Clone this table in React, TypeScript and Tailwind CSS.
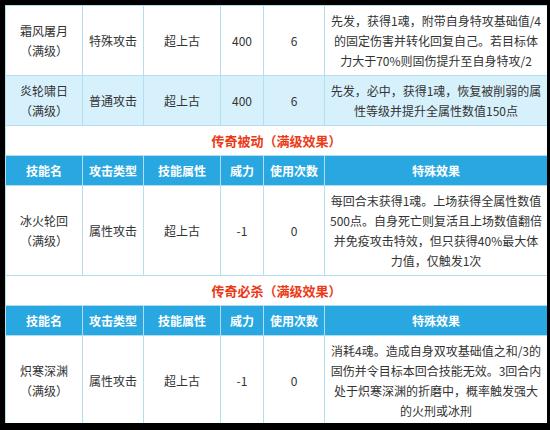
const font = { fontFamily: '"Microsoft YaHei", "Noto Sans CJK SC", sans-serif' };

type Row = {
  name: string;
  type: string;
  attr: string;
  power: string;
  uses: string;
  effect: string[];
  h: string;
  alt?: boolean;
};

const top: Row[] = [
  {
    name: "霜风屠月",
    type: "特殊攻击",
    attr: "超上古",
    power: "400",
    uses: "6",
    effect: ["先发，获得1魂，附带自身特攻基础值/4", "的固定伤害并转化回复自己。若目标体", "力大于70%则固伤提升至自身特攻/2"],
    h: "h-[70px]",
  },
  {
    name: "炎轮啸日",
    type: "普通攻击",
    attr: "超上古",
    power: "400",
    uses: "6",
    effect: ["先发，必中，获得1魂，恢复被削弱的属", "性等级并提升全属性数值150点"],
    h: "h-[50px]",
    alt: true,
  },
];

const passive: Row = {
  name: "冰火轮回",
  type: "属性攻击",
  attr: "超上古",
  power: "-1",
  uses: "0",
  effect: ["每回合末获得1魂。上场获得全属性数值", "500点。自身死亡则复活且上场数值翻倍", "并免疫攻击特效，但只获得40%最大体", "力值，仅触发1次"],
  h: "h-[90px]",
};

const ultimate: Row = {
  name: "炽寒深渊",
  type: "属性攻击",
  attr: "超上古",
  power: "-1",
  uses: "0",
  effect: ["消耗4魂。造成自身双攻基础值之和/3的", "固伤并令目标本回合技能无效。3回合内", "处于炽寒深渊的折磨中，概率触发强大", "的火刑或冰刑"],
  h: "h-[90px]",
};

const cell = "border border-[#b3def2] text-center align-middle p-0";

function DataRow({ r }: { r: Row }) {
  return (
    <tr className={`${r.h} ${r.alt ? "bg-[#d7f1fc]" : "bg-white"}`}>
      <td className={cell}>
        {r.name}
        <br />
        （满级）
      </td>
      <td className={cell}>{r.type}</td>
      <td className={cell}>{r.attr}</td>
      <td className={cell}>{r.power}</td>
      <td className={cell}>{r.uses}</td>
      <td className={cell}>
        {r.effect.map((l, i) => (
          <div key={i}>{l}</div>
        ))}
      </td>
    </tr>
  );
}

function Title({ text }: { text: string }) {
  return (
    <tr className="h-[30px] bg-white">
      <td colSpan={6} className={`${cell} text-[13px] font-bold text-[#ec3a16]`}>
        {text}
      </td>
    </tr>
  );
}

function Header() {
  const cols = ["技能名", "攻击类型", "技能属性", "威力", "使用次数", "特殊效果"];
  return (
    <tr className="h-[30px] bg-[#29a7e0] text-white font-bold">
      {cols.map((c) => (
        <td key={c} className={`${cell} border-[#7fc8ec]`}>
          {c}
        </td>
      ))}
    </tr>
  );
}

export default function App() {
  return (
    <div className="w-[550px] h-[430px] bg-black pt-[5px] pl-[5px] overflow-hidden" style={font}>
      <div className="w-[542px] h-[418px] overflow-hidden bg-white">
        <table className="w-[542px] table-fixed border-collapse text-[12px] leading-[20px] text-[#333]">
          <colgroup>
            <col className="w-[77px]" />
            <col className="w-[61px]" />
            <col className="w-[77px]" />
            <col className="w-[43px]" />
            <col className="w-[61px]" />
            <col className="w-[223px]" />
          </colgroup>
          <tbody>
            {top.map((r) => (
              <DataRow key={r.name} r={r} />
            ))}
            <Title text="传奇被动（满级效果）" />
            <Header />
            <DataRow r={passive} />
            <Title text="传奇必杀（满级效果）" />
            <Header />
            <DataRow r={ultimate} />
          </tbody>
        </table>
      </div>
    </div>
  );
}
